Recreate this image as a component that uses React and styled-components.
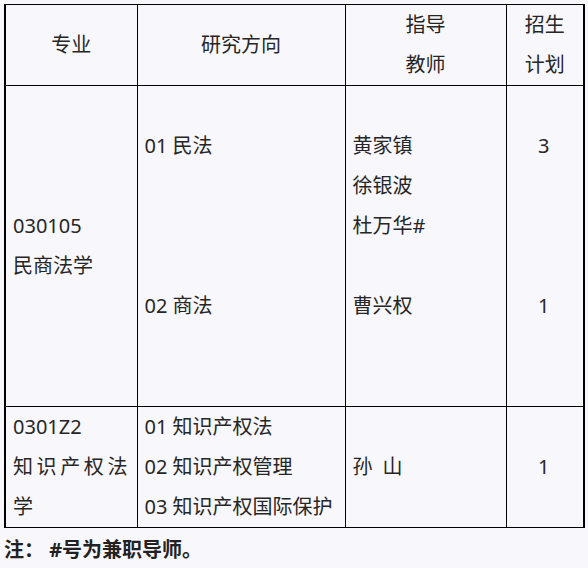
import React from "react";
import styled, { createGlobalStyle } from "styled-components";

const GlobalStyle = createGlobalStyle`
  html, body {
    margin: 0;
    background: #f8f7fc;
  }
  body {
    font-family: "Noto Sans", "Noto Sans CJK SC", sans-serif;
    color: #262626;
  }
`;

const rows = [
  {
    major: { lines: ["030105", "民商法学"] },
    cells: [
      ["", "01 民法", "", "", "", "02 商法", "", ""],
      ["", "黄家镇", "徐银波", "杜万华#", "", "曹兴权", "", ""],
      ["", "3", "", "", "", "1", "", ""],
    ],
  },
  {
    major: { lines: ["0301Z2", "知识产权法学"], justify: true },
    cells: [
      ["01 知识产权法", "02 知识产权管理", "03 知识产权国际保护"],
      ["孙\u2002山"],
      ["1"],
    ],
  },
];

function App() {
  return (
    <Page>
      <GlobalStyle />
      <Sheet>
        <colgroup>
          <col style={{ width: 132 }} />
          <col style={{ width: 208 }} />
          <col style={{ width: 161 }} />
          <col style={{ width: 78 }} />
        </colgroup>
        <thead>
          <tr>
            <HeadCell>专业</HeadCell>
            <HeadCell>研究方向</HeadCell>
            <HeadCell>
              <Line>指导</Line>
              <Line>教师</Line>
            </HeadCell>
            <HeadCell>
              <Line>招生</Line>
              <Line>计划</Line>
            </HeadCell>
          </tr>
        </thead>
        <tbody>
          {rows.map((row, i) => (
            <tr key={i}>
              <Cell $justify={row.major.justify}>
                {row.major.lines.map((l, j) => (
                  <Line key={j}>{l}</Line>
                ))}
              </Cell>
              {row.cells.map((lines, k) => (
                <Cell key={k} $center={k === 2}>
                  {lines.map((l, j) => (
                    <Line key={j}>{l || "\u00a0"}</Line>
                  ))}
                </Cell>
              ))}
            </tr>
          ))}
        </tbody>
      </Sheet>
      <Note>注： #号为兼职导师。</Note>
    </Page>
  );
}

export default App;

const Page = styled.div`
  padding: 4px 0 0 4px;
  width: 588px;
  height: 568px;
  box-sizing: border-box;
`;

const Sheet = styled.table`
  table-layout: fixed;
  border-collapse: collapse;
  width: 581px;
  border-top: 1px solid #000;
  border-bottom: 1px solid #000;
  border-left: 2px solid #000;
  border-right: 2px solid #000;
  font-size: 20px;
`;

const HeadCell = styled.th`
  border: 1px solid #000;
  padding: 0 7px;
  height: 80px;
  font-weight: 400;
  text-align: center;
  vertical-align: middle;
  line-height: 40px;
`;

const Cell = styled.td`
  border: 1px solid #000;
  padding: 0 9px 0 7px;
  vertical-align: middle;
  line-height: 40px;
  text-align: ${(p) => (p.$center ? "center" : "left")};

  ${(p) =>
    p.$justify &&
    `
    text-align: justify;
    text-justify: inter-character;
  `}
`;

const Line = styled.div`
  line-height: 40px;
`;

const Note = styled.p`
  margin: 0;
  padding-top: 8px;
  font-size: 20px;
  font-weight: 700;
  line-height: 28px;
  color: #222;
`;
